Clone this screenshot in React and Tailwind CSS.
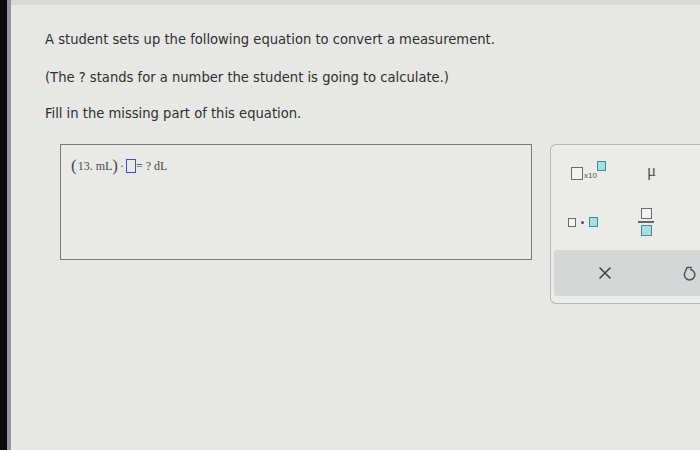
import React from "react";

function TealBox({ className = "" }) {
  return <div className={"border-[1.5px] border-[#3f8f9a] bg-[#a9dde2] " + className} />;
}
function GrayBox({ className = "" }) {
  return <div className={"border-[1.5px] border-[#6b6b6b] bg-[#f2f2f2] " + className} />;
}

export default function App() {
  return (
    <div className="flex h-[450px] w-[700px] overflow-hidden bg-[#e7e7e5]" style={{ fontFamily: '"DejaVu Sans Condensed", "DejaVu Sans", sans-serif' }}>
      <div className="w-[7px] shrink-0 bg-[#0c0c0e]" />
      <div className="w-[4px] shrink-0 bg-[#94969b]" />
      <div className="flex min-w-0 flex-1 flex-col">
        <div className="h-[5px] bg-[#d9d9d8]" />
        <div className="flex flex-col pl-[34px] pt-[24px] text-[14.6px] text-[#2f2f2f]">
          <div className="h-[20px] leading-[20px]">A student sets up the following equation to convert a measurement.</div>
          <div className="mt-[18px] h-[20px] leading-[20px]">(The ? stands for a number the student is going to calculate.)</div>
          <div className="mt-[16px] h-[20px] leading-[20px]">Fill in the missing part of this equation.</div>
          <div className="mt-[21px] flex items-start">
            <div className="ml-[15px] h-[116px] w-[472px] shrink-0 border-[1.5px] border-[#7a7a7a] bg-[#e9e9e7] pl-[10px] pt-[12px]">
              <div className="flex items-center text-[12px] text-[#4a4a4a]" style={{ fontFamily: '"Liberation Serif", serif' }}>
                <span className="text-[17px] leading-[18px]">(</span>
                <span className="ml-[1px]">13. mL</span>
                <span className="text-[17px] leading-[18px]">)</span>
                <span className="mx-[2px]">·</span>
                <div className="h-[14px] w-[10px] border-[1.5px] border-[#3e4fc6]" />
                <span>=</span>
                <span className="ml-[3px]">? dL</span>
              </div>
            </div>
            <div className="ml-[18px] flex h-[160px] w-[170px] shrink-0 flex-col rounded-l-[6px] border-[1.5px] border-r-0 border-[#b9b9b9] bg-[#ebebea]">
              <div className="flex h-[51px] items-center">
                <div className="ml-[20px] flex w-[40px] items-end">
                  <GrayBox className="h-[13px] w-[12px]" />
                  <span className="ml-[1px] text-[8px] leading-[9px] text-[#555]" style={{ fontFamily: '"Liberation Sans", sans-serif' }}>x10</span>
                  <TealBox className="mb-[9px] h-[10px] w-[9px]" />
                </div>
                <span className="ml-[36px] text-[17px] text-[#555]" style={{ fontFamily: '"Liberation Serif", serif' }}>μ</span>
              </div>
              <div className="flex h-[52px] items-center">
                <div className="ml-[17px] flex items-center">
                  <GrayBox className="h-[9px] w-[8px]" />
                  <div className="ml-[5px] h-[3px] w-[3px] rounded-full bg-[#555]" />
                  <TealBox className="ml-[5px] h-[10px] w-[9px]" />
                </div>
                <div className="ml-[40px] flex flex-col items-center">
                  <GrayBox className="h-[11px] w-[11px]" />
                  <div className="my-[2px] h-[1.5px] w-[16px] bg-[#666]" />
                  <TealBox className="h-[11px] w-[11px]" />
                </div>
              </div>
              <div className="mx-[3px] mt-[2px] flex h-[46px] items-center rounded-[3px] bg-[#d5d7d7]">
                <svg className="ml-[44px]" width="14" height="14" viewBox="0 0 14 14" fill="none" stroke="#3c4550" strokeWidth="1.6" strokeLinecap="round">
                  <path d="M2 2 L12 12 M12 2 L2 12" />
                </svg>
                <svg className="ml-[69px] shrink-0" width="16" height="16" viewBox="0 0 16 16" fill="none" stroke="#4a5560" strokeWidth="1.5" strokeLinecap="round" strokeLinejoin="round">
                  <path d="M10.5 2.5 H6 L4.4 6.6 A5.2 5.2 0 1 0 9.6 4.6" />
                </svg>
              </div>
            </div>
          </div>
        </div>
      </div>
    </div>
  );
}
